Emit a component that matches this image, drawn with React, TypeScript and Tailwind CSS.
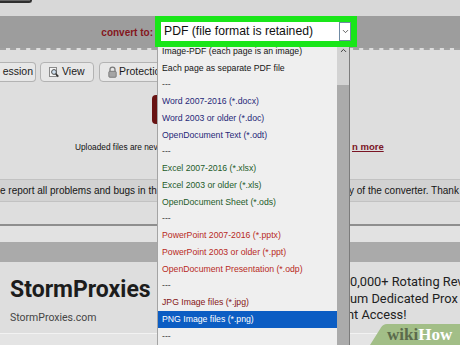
import { ChevronDown, ChevronUp } from "lucide-react";

type Item = { label: string; color: string; selected?: boolean };

const items: Item[] = [
  { label: "Image-PDF (each page is an image)", color: "text-[#151515]" },
  { label: "Each page as separate PDF file", color: "text-[#151515]" },
  { label: "---", color: "text-[#3a3a3a]" },
  { label: "Word 2007-2016 (*.docx)", color: "text-[#1f2878]" },
  { label: "Word 2003 or older (*.doc)", color: "text-[#1f2878]" },
  { label: "OpenDocument Text (*.odt)", color: "text-[#1f2878]" },
  { label: "---", color: "text-[#3a3a3a]" },
  { label: "Excel 2007-2016 (*.xlsx)", color: "text-[#1d5c2a]" },
  { label: "Excel 2003 or older (*.xls)", color: "text-[#1d5c2a]" },
  { label: "OpenDocument Sheet (*.ods)", color: "text-[#1d5c2a]" },
  { label: "---", color: "text-[#3a3a3a]" },
  { label: "PowerPoint 2007-2016 (*.pptx)", color: "text-[#b82a1e]" },
  { label: "PowerPoint 2003 or older (*.ppt)", color: "text-[#b82a1e]" },
  { label: "OpenDocument Presentation (*.odp)", color: "text-[#b82a1e]" },
  { label: "---", color: "text-[#3a3a3a]" },
  { label: "JPG Image files (*.jpg)", color: "text-[#861515]" },
  { label: "PNG Image files (*.png)", color: "text-white", selected: true },
  { label: "---", color: "text-[#3a3a3a]" },
];

const ViewIcon = () => (
  <svg width="10" height="11" viewBox="0 0 10 11">
    <rect x="0.5" y="0.5" width="7" height="9" fill="#f4f4f4" stroke="#8a8a8a" />
    <circle cx="5" cy="5" r="2.4" fill="#cfe0f0" stroke="#4b4b4b" strokeWidth="1" />
    <line x1="6.7" y1="6.8" x2="9.3" y2="9.6" stroke="#333" strokeWidth="1.6" />
  </svg>
);

const LockIcon = () => (
  <svg width="9" height="12" viewBox="0 0 9 12">
    <path d="M2 5.5V3.6a2.5 2.5 0 0 1 5 0v1.9" fill="none" stroke="#7a7a7a" strokeWidth="1.3" />
    <rect x="0.8" y="5.3" width="7.4" height="6" rx="1" fill="#a5a5a5" stroke="#6e6e6e" strokeWidth="0.8" />
  </svg>
);

const Dropdown = () => (
  <div className="absolute left-[157px] top-[43px] z-10 flex h-[302px] w-[193px] border-l border-r border-l-[#a4a4a4] border-r-[#7c7c7c] bg-[#efefef]">
    <div className="flex-1">
      {items.map((item, i) => (
        <div
          key={i}
          className={`flex h-[16.75px] items-center whitespace-nowrap pl-[4px] text-[8.7px] ${item.color} ${
            item.selected ? "bg-[#0c5dc3]" : ""
          }`}
        >
          {item.label}
        </div>
      ))}
    </div>
    <div className="flex w-[12px] flex-col">
      <div className="flex h-[42px] justify-center bg-[#d3d3d3] pt-[3px]">
        <ChevronUp size={9} strokeWidth={2.5} className="text-[#333]" />
      </div>
      <div className="flex-1 bg-[#ababab]" />
    </div>
  </div>
);

const WikiHow = () => (
  <div className="absolute left-[370px] top-[324px] z-20 h-[21px] w-[90px]">
    <svg width="90" height="21" viewBox="0 0 90 21" className="absolute left-0 top-0">
      <path d="M0 21 L11 3.5 Q13 0 17 0 L90 0 L90 21 Z" fill="#9cbb7f" opacity="0.92" />
    </svg>
    <div className="absolute left-[17px] top-[1px] font-['Liberation_Serif',serif] text-[17px] font-bold leading-[20px]">
      <span className="text-[#5b6b4c]">wiki</span>
      <span className="text-white">How</span>
    </div>
  </div>
);

export default function App() {
  return (
    <div className="relative h-[345px] w-[460px] overflow-hidden bg-[#dedede] font-['Liberation_Sans',Arial,sans-serif]">
      <div className="h-[16px] bg-[#d8d8d8]">
        <div className="h-[3px] w-[32px] rounded-br-[4px] border-b-2 border-r-2 border-[#2e2e2e] bg-[#666]" />
      </div>

      <div className="flex h-[32px] items-start bg-[#9d9d9d]">
        <div className="flex h-[32px] w-[155px] shrink-0 items-center justify-end pr-[2px] text-[10px] font-bold text-[#84161c]">
          convert to:
        </div>
        <div className="relative z-20 flex h-[31px] w-[202px] shrink-0 border-[6px] border-[#19e619] bg-white">
          <div className="flex flex-1 items-center whitespace-nowrap pl-[3px] text-[12.2px] text-[#111]">
            PDF (file format is retained)
          </div>
          <div className="flex w-[12px] items-center justify-center border border-[#6f8aa3] bg-white">
            <ChevronDown size={9} strokeWidth={2} className="text-[#333]" />
          </div>
        </div>
      </div>

      <div className="border-t-2 border-dashed border-[#a2a2a2]">
        <div className="mt-[12px] flex h-[20px] text-[10.5px] text-[#1b1b1b]">
          <div className="flex w-[36px] shrink-0 items-center justify-end rounded-r-[4px] border border-l-0 border-[#b3b3b3] bg-[#e7e7e7] pr-[2px]">
            ession
          </div>
          <div className="ml-[4px] flex w-[54px] shrink-0 items-center gap-[3px] rounded-[4px] border border-[#b3b3b3] bg-[#e7e7e7] pl-[8px]">
            <ViewIcon />
            View
          </div>
          <div className="ml-[5px] flex w-[90px] shrink-0 items-center gap-[2px] rounded-[4px] border border-[#b3b3b3] bg-[#e7e7e7] pl-[8px]">
            <LockIcon />
            Protection
          </div>
        </div>

        <div className="mt-[13px] ml-[152px] h-[29px] w-[90px] rounded-[4px] bg-[#681313]" />

        <div className="mt-[17px] flex h-[12px] items-center whitespace-nowrap">
          <div className="w-[352px] shrink-0 pl-[75px] text-[8.3px] text-[#111]">Uploaded files are nev</div>
          <div className="text-[9.5px] font-bold text-[#7a1424] underline">n more</div>
        </div>

        <div className="mt-[26px] flex h-[23px] items-center overflow-hidden whitespace-nowrap border-y border-y-[#c2c2c2] bg-[#d2d2d2] text-[10px] text-[#151515]">
          <div className="w-[349px] shrink-0">e report all problems and bugs in th</div>
          <div className="shrink-0">y of the converter. Thank</div>
        </div>

        <div className="h-[22px]" />
        <div className="h-[2px] bg-[#8e8e8e]" />
        <div className="h-[16px] bg-[#e2e2e2]" />
        <div className="h-[20px] bg-[#aaaaaa]" />

        <div className="flex h-[71px] overflow-hidden whitespace-nowrap font-['Roboto',sans-serif]">
          <div className="w-[350px] shrink-0 pl-[10px] pt-[16px]">
            <div className="text-[23px] font-bold leading-[24px] text-[#1c1c1c]">StormProxies</div>
            <div className="mt-[9px] text-[10.5px] leading-[13px] text-[#454545]">StormProxies.com</div>
          </div>
          <div className="shrink-0 pt-[12px] text-[12.8px] leading-[16.5px] text-[#222]">
            <div>0,000+ Rotating Rev</div>
            <div>um Dedicated Prox</div>
            <div className="-ml-[3px]">nt Access!</div>
          </div>
        </div>
        <div className="h-[1px] bg-[#f2f2f2]" />
        <div className="h-[20px] bg-[#e4e4e4]" />
      </div>

      <Dropdown />
      <WikiHow />
    </div>
  );
}
